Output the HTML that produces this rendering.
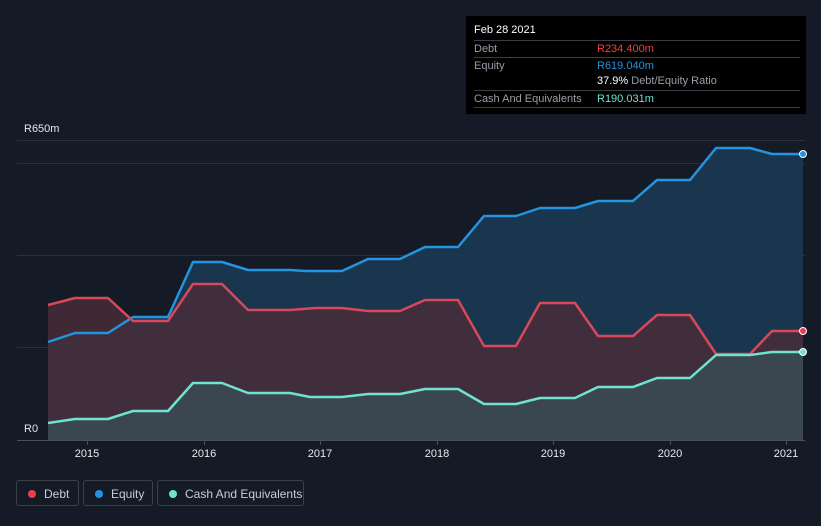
<!DOCTYPE html>
<html><head><style>
body{margin:0;background:#151b26;width:821px;height:526px;overflow:hidden;font-family:"Liberation Sans",sans-serif;position:relative}
.tt{position:absolute;left:466px;top:16px;width:340px;height:98px;background:#000;color:#fff;font-size:11px}
.row{position:absolute;left:8px;width:326px;border-top:1px solid #3a3d44;height:16px;line-height:16px}
.row span.l{color:#9a9ea6}
.row span.v{position:absolute;left:123px}
.leg{position:absolute;top:480px;height:26px;border:1px solid #3a3f48;border-radius:3px;color:#c8ccd3;font-size:12px;line-height:26px;box-sizing:border-box}
.leg i{position:absolute;left:11px;top:9px;width:8px;height:8px;border-radius:50%}
.leg span{position:absolute;left:27px}
</style></head><body>
<svg width="821" height="526" style="position:absolute;left:0;top:0">
<g stroke="#2a313c" stroke-width="1">
<line x1="17" y1="140.5" x2="805" y2="140.5"/>
<line x1="17" y1="163.5" x2="805" y2="163.5"/>
<line x1="17" y1="255.5" x2="805" y2="255.5"/>
<line x1="17" y1="347.5" x2="805" y2="347.5"/>
</g>
<polygon fill="#1b3853" opacity="0.9" points="48,440 48,342 75,333 108,333 133,317 168,317 193,262 222,262 248,270 290,270 305,271 342,271 368,259 400,259 425,247 458,247 484,216 516,216 540,208 575,208 598,201 633,201 657,180 690,180 716,148 750,148 772,154 803,154 803,440"/>
<polygon fill="#4a2d3a" opacity="0.8" points="48,440 48,305 75,298 108,298 133,321 168,321 193,284 222,284 248,310 290,310 315,308 342,308 368,311 400,311 425,300 458,300 484,346 516,346 540,303 575,303 598,336 633,336 657,315 690,315 716,354 750,354 772,331 803,331 803,440"/>
<polygon fill="#3a4a52" opacity="0.9" points="48,440 48,423 75,419 108,419 133,411 168,411 193,383 222,383 248,393 290,393 310,397 342,397 368,394 400,394 425,389 458,389 484,404 516,404 540,398 575,398 598,387 633,387 657,378 690,378 716,355 750,355 772,352 803,352 803,440"/>
<g fill="none" stroke-width="2.5" stroke-linejoin="round">
<polyline stroke="#2394df" points="48,342 75,333 108,333 133,317 168,317 193,262 222,262 248,270 290,270 305,271 342,271 368,259 400,259 425,247 458,247 484,216 516,216 540,208 575,208 598,201 633,201 657,180 690,180 716,148 750,148 772,154 803,154"/>
<polyline stroke="#d9475a" points="48,305 75,298 108,298 133,321 168,321 193,284 222,284 248,310 290,310 315,308 342,308 368,311 400,311 425,300 458,300 484,346 516,346 540,303 575,303 598,336 633,336 657,315 690,315 716,354 750,354 772,331 803,331"/>
<polyline stroke="#6fe3d0" points="48,423 75,419 108,419 133,411 168,411 193,383 222,383 248,393 290,393 310,397 342,397 368,394 400,394 425,389 458,389 484,404 516,404 540,398 575,398 598,387 633,387 657,378 690,378 716,355 750,355 772,352 803,352"/>
</g>
<circle cx="803" cy="154" r="3.5" fill="#2394df" stroke="#fff" stroke-width="1"/>
<circle cx="803" cy="331" r="3.5" fill="#e8404a" stroke="#fff" stroke-width="1"/>
<circle cx="803" cy="352" r="3.5" fill="#6fe3d0" stroke="#fff" stroke-width="1"/>
<line x1="17" y1="440.5" x2="805" y2="440.5" stroke="#4a4f58"/>
<g stroke="#4a4f58"><line x1="87.5" y1="440" x2="87.5" y2="445"/><line x1="204.5" y1="440" x2="204.5" y2="445"/><line x1="320.5" y1="440" x2="320.5" y2="445"/><line x1="437.5" y1="440" x2="437.5" y2="445"/><line x1="553.5" y1="440" x2="553.5" y2="445"/><line x1="670.5" y1="440" x2="670.5" y2="445"/><line x1="786.5" y1="440" x2="786.5" y2="445"/></g>
<g fill="#e6e8ec" font-size="11" font-family="Liberation Sans,sans-serif" text-anchor="middle">
<text x="87" y="457">2015</text><text x="204" y="457">2016</text><text x="320" y="457">2017</text><text x="437" y="457">2018</text><text x="553" y="457">2019</text><text x="670" y="457">2020</text><text x="786" y="457">2021</text>
</g>
<rect x="17" y="420" width="30" height="18" fill="#151b26"/>
<text x="24" y="132" fill="#e6e8ec" font-size="11" font-family="Liberation Sans,sans-serif">R650m</text>
<text x="24" y="432" fill="#e6e8ec" font-size="11" font-family="Liberation Sans,sans-serif">R0</text>
</svg>
<div class="tt">
<div style="position:absolute;left:8px;top:8px;font-size:11px">Feb 28 2021</div>
<div class="row" style="top:24px"><span class="l">Debt</span><span class="v" style="color:#f0413f">R234.400m</span></div>
<div class="row" style="top:41px"><span class="l">Equity</span><span class="v" style="color:#2394df">R619.040m</span></div>
<div class="row" style="top:57px;border-top:none"><span class="v">37.9% <span style="color:#9a9ea6">Debt/Equity Ratio</span></span></div>
<div class="row" style="top:74px;border-bottom:1px solid #3a3d44"><span class="l">Cash And Equivalents</span><span class="v" style="color:#6fe3d0">R190.031m</span></div>
</div>
<div class="leg" style="left:16px;width:63px"><i style="background:#e8404a"></i><span>Debt</span></div>
<div class="leg" style="left:83px;width:70px"><i style="background:#2394df"></i><span>Equity</span></div>
<div class="leg" style="left:157px;width:147px"><i style="background:#6fe3d0"></i><span>Cash And Equivalents</span></div>
</body></html>
